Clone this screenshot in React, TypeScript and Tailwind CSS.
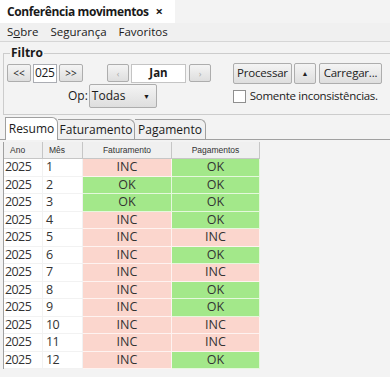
import React from 'react';

type Row = { mes: number; fat: 'OK' | 'INC'; pag: 'OK' | 'INC' };

const rows: Row[] = [
  { mes: 1, fat: 'INC', pag: 'OK' },
  { mes: 2, fat: 'OK', pag: 'OK' },
  { mes: 3, fat: 'OK', pag: 'OK' },
  { mes: 4, fat: 'INC', pag: 'OK' },
  { mes: 5, fat: 'INC', pag: 'INC' },
  { mes: 6, fat: 'INC', pag: 'OK' },
  { mes: 7, fat: 'INC', pag: 'INC' },
  { mes: 8, fat: 'INC', pag: 'OK' },
  { mes: 9, fat: 'INC', pag: 'OK' },
  { mes: 10, fat: 'INC', pag: 'INC' },
  { mes: 11, fat: 'INC', pag: 'INC' },
  { mes: 12, fat: 'INC', pag: 'OK' },
];

function Btn({ children, className = '' }: { children: React.ReactNode; className?: string }) {
  return (
    <div
      className={`flex items-center justify-center rounded-[2px] border border-[#adadad] bg-gradient-to-b from-[#f4f4f4] to-[#dedede] leading-none text-[#222] ${className}`}
    >
      {children}
    </div>
  );
}

function StatusCell({ v }: { v: 'OK' | 'INC' }) {
  return (
    <div
      className={`flex h-[17.5px] items-center justify-center border-r border-b border-white/70 text-[12.5px] leading-none text-[#333] ${
        v === 'OK' ? 'bg-[#a3e88a]' : 'bg-[#fbd6cd]'
      }`}
    >
      {v}
    </div>
  );
}

export default function App() {
  return (
    <div className="h-[377px] w-[390px] overflow-hidden bg-[#f3f3f3] font-['Open_Sans',sans-serif] text-[#1a1a1a]">
      {/* title tab */}
      <div className="flex h-[23px]">
        <div className="flex w-[175px] items-center bg-white pl-[7px] text-[12px] font-bold tracking-[-0.4px]">
          <span>Conferência movimentos</span>
          <span className="ml-[7px] text-[13px]">×</span>
        </div>
      </div>

      {/* menu */}
      <div className="flex h-[19px] items-center gap-[12px] border-b border-[#d6d6d6] bg-[#f0f0f0] pl-[7px] text-[11.5px]">
        <span>
          S<span className="underline">o</span>bre
        </span>
        <span>Segurança</span>
        <span>Favoritos</span>
      </div>

      {/* filtro */}
      <fieldset className="ml-[3px] mt-[4px] h-[69px] w-[400px] border border-[#cccccc] px-[3px]">
        <legend className="ml-[3px] px-[1px] text-[12px] font-bold leading-[14px]">Filtro</legend>
        <div className="mt-[3px] flex h-[20px] items-center">
          <Btn className="h-[18px] w-[24px] text-[10px]">&lt;&lt;</Btn>
          <div className="ml-[2px] flex h-[19px] w-[24px] items-center border border-[#abadb3] bg-white pl-[1px] text-[12px] leading-none tracking-[-0.4px]">
            025
          </div>
          <Btn className="ml-[2px] h-[18px] w-[24px] text-[10px]">&gt;&gt;</Btn>
          <Btn className="ml-[24px] h-[18px] w-[22px] text-[9px] text-[#aaa]">‹</Btn>
          <div className="ml-[2px] flex h-[19px] w-[55px] items-center justify-center border border-[#c4c4c4] bg-white text-[11.5px] font-bold leading-none">
            Jan
          </div>
          <Btn className="ml-[3px] h-[18px] w-[22px] text-[9px] text-[#aaa]">›</Btn>
          <Btn className="ml-[22px] h-[21px] w-[59px] text-[11.5px] tracking-[-0.2px]">Processar</Btn>
          <Btn className="ml-[2px] h-[21px] w-[22px] text-[7px]">▲</Btn>
          <Btn className="ml-[3px] h-[21px] w-[63px] text-[11.5px] tracking-[-0.2px]">Carregar...</Btn>
        </div>
        <div className="mt-[1px] flex h-[24px] items-center">
          <span className="ml-[61px] text-[12px] leading-none">Op:</span>
          <div className="ml-[1px] flex h-[24px] w-[68px] items-center justify-between rounded-[2px] border border-[#adadad] bg-gradient-to-b from-[#f4f4f4] to-[#dedede] pl-[2px] pr-[6px] text-[12px] leading-none">
            <span>Todas</span>
            <span className="text-[7px]">▼</span>
          </div>
          <div className="ml-[76px] flex items-center whitespace-nowrap">
            <div className="h-[13px] w-[13px] border border-[#8f8f8f] bg-white" />
            <span className="ml-[4px] text-[11.5px] leading-none tracking-[-0.3px] text-[#222]">
              Somente inconsistências.
            </span>
          </div>
        </div>
      </fieldset>

      {/* tabs */}
      <div className="mt-[2px] flex h-[23px] items-end border-b border-[#a0a0a0] pl-[5px] text-[12px] leading-none">
        <div className="relative z-10 -mb-px flex h-[23px] w-[53px] items-center justify-center rounded-tr-[6px] border border-b-0 border-[#a0a0a0] bg-white">
          Resumo
        </div>
        <div className="flex h-[20px] w-[77px] items-center justify-center rounded-tr-[6px] border border-l-0 border-b-0 border-[#a0a0a0] bg-[#f0f0f0]">
          Faturamento
        </div>
        <div className="flex h-[20px] w-[71px] items-center justify-center rounded-tr-[6px] border border-l-0 border-b-0 border-[#a0a0a0] bg-[#f0f0f0]">
          Pagamento
        </div>
      </div>

      {/* table */}
      <div className="ml-[3px] mt-[2px] border-l border-[#a0a0a0]">
        <div className="grid w-[256px] grid-cols-[39px_40px_89px_88px]">
          {['Ano', 'Mês'].map((h) => (
            <div
              key={h}
              className="flex h-[17px] items-center border-r border-b border-[#c6c6c6] bg-[#f0f0f0] pl-[6px] font-['Liberation_Sans',sans-serif] text-[8.5px] leading-none text-[#333]"
            >
              {h}
            </div>
          ))}
          {['Faturamento', 'Pagamentos'].map((h) => (
            <div
              key={h}
              className="flex h-[17px] items-center justify-center border-r border-b border-[#c6c6c6] bg-[#f0f0f0] font-['Liberation_Sans',sans-serif] text-[8.5px] leading-none text-[#333]"
            >
              {h}
            </div>
          ))}
          {rows.map((r) => (
            <React.Fragment key={r.mes}>
              <div className="flex h-[17.5px] items-center border-r border-b border-[#f2f2f2] bg-white pl-[1px] text-[12.5px] leading-none tracking-[-0.6px] text-[#333]">
                2025
              </div>
              <div className="flex h-[17.5px] items-center border-r border-b border-[#f2f2f2] bg-white pl-[3px] text-[12.5px] leading-none tracking-[-0.6px] text-[#333]">
                {r.mes}
              </div>
              <StatusCell v={r.fat} />
              <StatusCell v={r.pag} />
            </React.Fragment>
          ))}
        </div>
      </div>
    </div>
  );
}
